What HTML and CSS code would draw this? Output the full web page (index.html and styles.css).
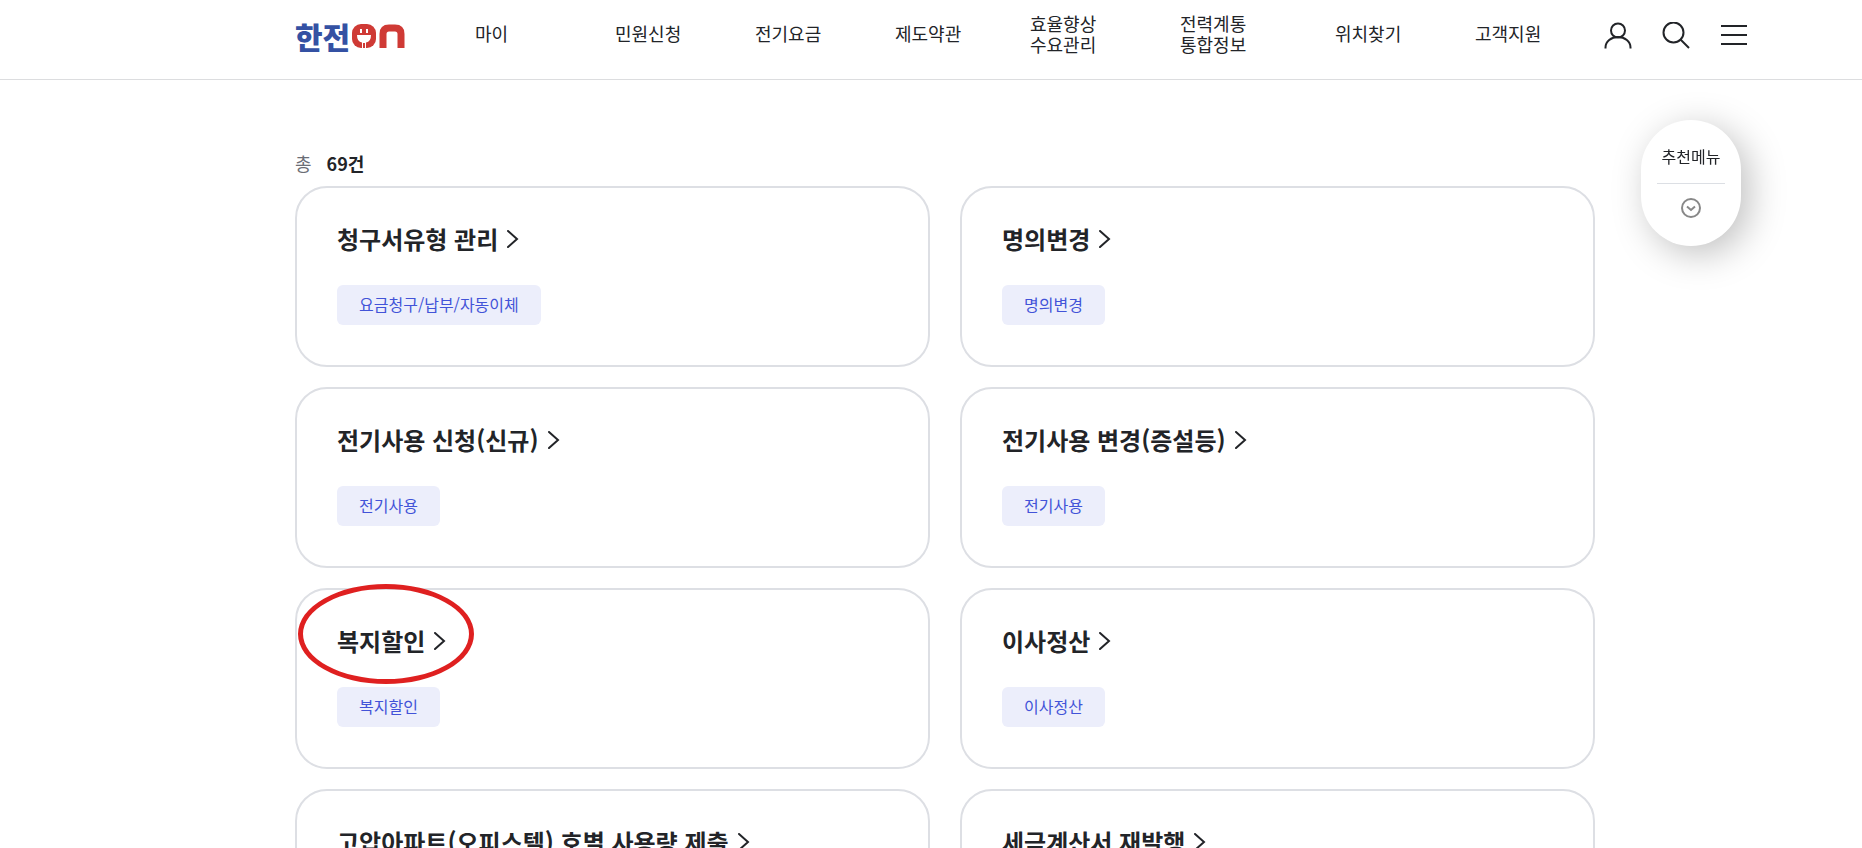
FILE: index.html
```
<!DOCTYPE html>
<html lang="ko">
<head>
    <meta charset="UTF-8">
    <meta name="viewport" content="width=device-width, initial-scale=1.0">
    <title>한전ON</title>
    <link rel="stylesheet" href="styles.css">
</head>
<body>
    <header>
        <a href="#" class="logo" aria-label="한전ON">
            <span class="logo-text">한전</span>
            <svg width="54" height="24" viewBox="0 0 54 24" aria-hidden="true">
                <rect width="24" height="24" rx="9" fill="#cf3a35"/>
                <path d="M9 5v4M15 5v4" stroke="#fff" stroke-width="2"/>
                <path d="M5 11h14q0 7-5 7.500v5.500h-4v-5.500q-5-.5-5-7.500z" fill="#fff"/>
                <path d="M12 19v5" stroke="#cf3a35" stroke-width="2"/>
                <path d="M31 24v-14q0-6 6-6h6q6 0 6 6v14" fill="none" stroke="#cf3a35" stroke-width="7"/>
            </svg>
        </a>
        <nav>
            <ul class="menu">
                <li><a href="#">마이</a></li>
                <li><a href="#">민원신청</a></li>
                <li><a href="#">전기요금</a></li>
                <li><a href="#">제도약관</a></li>
                <li><a href="#">효율향상<br>수요관리</a></li>
                <li><a href="#">전력계통<br>통합정보</a></li>
                <li><a href="#">위치찾기</a></li>
                <li><a href="#">고객지원</a></li>
            </ul>
        </nav>
        <div class="util">
            <button type="button" aria-label="로그인">
                <svg width="28" height="28" viewBox="0 0 28 28"><circle cx="14" cy="8.500" r="7"/><path d="M1.500 26.500v-1a12.500 10.500 0 0 1 25 0v1"/></svg>
            </button>
            <button type="button" aria-label="검색">
                <svg width="28" height="28" viewBox="0 0 28 28"><circle cx="11.500" cy="10.500" r="10"/><path d="M18.500 17.500l8.500 8.500"/></svg>
            </button>
            <button type="button" aria-label="전체메뉴">
                <svg width="28" height="28" viewBox="0 0 28 28"><path d="M1 4h26M1 13h26M1 22h26"/></svg>
            </button>
        </div>
    </header>

    <main>
        <p class="total">총 <strong>69건</strong></p>
        <ul class="card-list">
            <li class="card">
                <a href="#" class="card-title">청구서유형 관리<svg class="arrow" viewBox="0 0 12 18"><path d="M1 1l9 8-9 8"/></svg></a>
                <span class="tag">요금청구/납부/자동이체</span>
            </li>
            <li class="card">
                <a href="#" class="card-title">명의변경<svg class="arrow" viewBox="0 0 12 18"><path d="M1 1l9 8-9 8"/></svg></a>
                <span class="tag">명의변경</span>
            </li>
            <li class="card">
                <a href="#" class="card-title">전기사용 신청(신규)<svg class="arrow" viewBox="0 0 12 18"><path d="M1 1l9 8-9 8"/></svg></a>
                <span class="tag">전기사용</span>
            </li>
            <li class="card">
                <a href="#" class="card-title">전기사용 변경(증설등)<svg class="arrow" viewBox="0 0 12 18"><path d="M1 1l9 8-9 8"/></svg></a>
                <span class="tag">전기사용</span>
            </li>
            <li class="card marked">
                <a href="#" class="card-title">복지할인<svg class="arrow" viewBox="0 0 12 18"><path d="M1 1l9 8-9 8"/></svg></a>
                <span class="tag">복지할인</span>
            </li>
            <li class="card">
                <a href="#" class="card-title">이사정산<svg class="arrow" viewBox="0 0 12 18"><path d="M1 1l9 8-9 8"/></svg></a>
                <span class="tag">이사정산</span>
            </li>
            <li class="card">
                <a href="#" class="card-title">고압아파트(오피스텔) 호별 사용량 제출<svg class="arrow" viewBox="0 0 12 18"><path d="M1 1l9 8-9 8"/></svg></a>
            </li>
            <li class="card">
                <a href="#" class="card-title">세금계산서 재발행<svg class="arrow" viewBox="0 0 12 18"><path d="M1 1l9 8-9 8"/></svg></a>
            </li>
        </ul>
    </main>

    <!-- 추천메뉴 플로팅 버튼 -->
    <button type="button" class="quick">
        <span class="quick-label">추천메뉴</span>
        <svg width="20" height="20" viewBox="0 0 20 20"><circle cx="10" cy="10" r="9"/><path d="M6 8.500l4 3.500 4-3.500"/></svg>
    </button>
</body>
</html>
```
FILE: styles.css
```
* {
    box-sizing: border-box;
}
html {
    scrollbar-width: none;
}
body {
    margin: 0;
    font-family: "Noto Sans CJK KR", "Noto Sans", sans-serif;
    color: #222428;
    background-color: #fff;
}
ul {
    list-style: none;
    margin: 0;
    padding: 0;
}
a {
    color: inherit;
    text-decoration: none;
}
button {
    padding: 0;
    border: none;
    background: none;
    font-family: inherit;
    color: inherit;
    cursor: pointer;
}
svg {
    display: block;
}
header {
    display: flex;
    align-items: center;
    height: 80px;
    padding: 0 114px 8px 295px;
    border-bottom: 1px solid #dcdddf;
}
.logo {
    display: flex;
    align-items: center;
    width: 180px;
    gap: 2px;
}
.logo-text {
    font-size: 30px;
    line-height: 30px;
    font-weight: 900;
    color: #3451a3;
}
.menu {
    display: grid;
    grid-template-columns: 140px 140px 140px 135px 150px 155px 140px auto;
    align-items: center;
    padding-bottom: 4px;
    font-size: 18px;
    line-height: 21px;
    white-space: nowrap;
}
.util {
    display: flex;
    gap: 30px;
    margin-left: auto;
}
.util svg {
    fill: none;
    stroke: #222428;
    stroke-width: 2;
}
main {
    max-width: 1328px;
    margin: 0 auto;
    padding: 69px 0 60px 28px;
}
.total {
    margin: 0 0 9px;
    font-size: 18px;
    line-height: 28px;
    color: #6b6e76;
}
.total strong {
    margin-left: 10px;
    font-weight: 700;
    color: #222428;
}
.card-list {
    display: grid;
    grid-template-columns: 1fr 1fr;
    gap: 20px 30px;
}
.card {
    position: relative;
    min-height: 181px;
    padding: 33px 40px 40px;
    border: 2px solid #dddfe4;
    border-radius: 32px;
}
.card-title {
    display: flex;
    align-items: center;
    gap: 9px;
    margin-bottom: 28px;
    font-size: 24px;
    line-height: 36px;
    font-weight: 700;
}
.arrow {
    width: 12px;
    height: 18px;
    fill: none;
    stroke: #222428;
    stroke-width: 2;
    stroke-linecap: round;
}
.tag {
    display: inline-block;
    padding: 0 22px 2px;
    border-radius: 6px;
    background-color: #eceefb;
    color: #4253d8;
    font-size: 16px;
    line-height: 38px;
}
/* 강조 표시 */
.marked::after {
    content: "";
    position: absolute;
    left: 1px;
    top: -6px;
    box-sizing: border-box;
    width: 176px;
    height: 100px;
    border: 5px solid #df2020;
    border-radius: 50%;
}
.quick {
    position: fixed;
    top: 120px;
    right: 121px;
    display: flex;
    flex-direction: column;
    align-items: center;
    width: 100px;
    padding: 20px 16px 28px;
    border-radius: 50px;
    background-color: #fff;
    box-shadow: 8px 8px 36px rgba(0, 0, 0, 0.25);
}
.quick-label {
    width: 100%;
    margin-bottom: 14px;
    padding: 3px 0 13px;
    border-bottom: 1px solid #dcdfe4;
    font-size: 16px;
    line-height: 27px;
    white-space: nowrap;
}
.quick svg {
    fill: none;
    stroke: #888;
    stroke-width: 2;
}
```
